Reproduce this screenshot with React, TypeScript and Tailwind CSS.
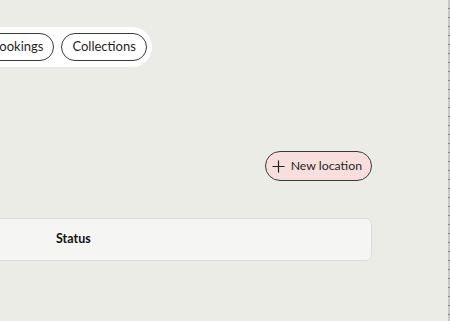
import React from "react";
import { Plus } from "lucide-react";

export default function App() {
  return (
    <div
      className="relative w-[450px] h-[321px] overflow-hidden bg-[#ecece6] flex"
      style={{ fontFamily: 'Lato, sans-serif' }}
    >
      <div className="flex-1 flex flex-col">
        <div className="mt-[27px] -ml-[26px] self-start flex items-center gap-[7px] bg-white rounded-full p-[6px] pr-[5px]">
          <span className="h-[28px] px-[10px] flex items-center rounded-full border border-[#3a3a3a] text-[13px] text-[#1f1f1f]">
            Bookings
          </span>
          <span className="h-[28px] px-[10px] flex items-center rounded-full border border-[#3a3a3a] text-[13px] text-[#1f1f1f]">
            Collections
          </span>
        </div>
        <div className="mt-[84px] w-[372px] flex justify-end">
          <button className="h-[30px] pl-[3px] pr-[9px] flex items-center gap-[3px] rounded-full border border-[#3a3a3a] bg-[#f8dfdd] text-[12.3px] text-[#1f1f1f]">
            <Plus size={19} strokeWidth={1.5} />
            New location
          </button>
        </div>
        <div className="mt-[37px] -ml-[20px] w-[392px] h-[43px] bg-[#f5f5f4] border border-[#e2dada] rounded-[6px] flex items-center">
          <span className="ml-[75px] text-[12.5px] font-bold text-[#111]">Status</span>
        </div>
      </div>
      <div
        className="w-[2px] h-full bg-[#d0d0d0]"
        style={{
          backgroundImage:
            "repeating-linear-gradient(to bottom, #c8c8c8 0px, #c8c8c8 8px, #8a8a8a 8px, #8a8a8a 9px)",
        }}
      />
    </div>
  );
}
